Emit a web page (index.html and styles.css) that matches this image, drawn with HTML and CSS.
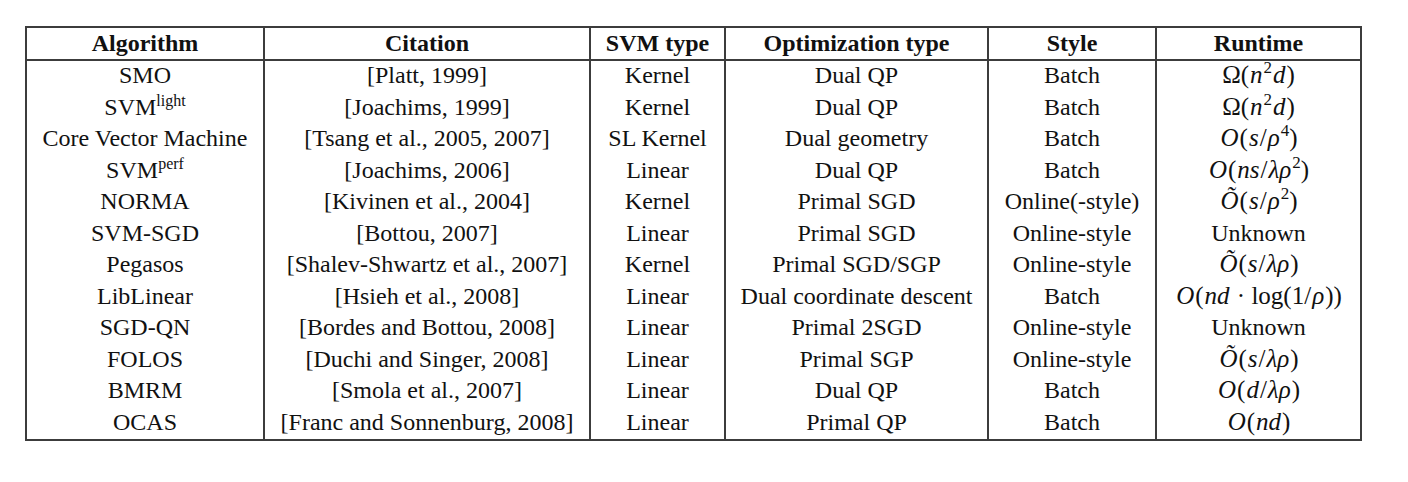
FILE: index.html
```html
<!DOCTYPE html>
<html>
<head>
<meta charset="utf-8">
<link rel="stylesheet" href="styles.css">
</head>
<body>
<div class="page">
<table class="svm">
<colgroup>
<col class="c1"><col class="c2"><col class="c3"><col class="c4"><col class="c5"><col class="c6">
</colgroup>
<thead>
<tr><th>Algorithm</th><th>Citation</th><th>SVM type</th><th>Optimization type</th><th>Style</th><th>Runtime</th></tr>
</thead>
<tbody>
<tr><td>SMO</td><td>[Platt, 1999]</td><td>Kernel</td><td>Dual QP</td><td>Batch</td><td class="m">Ω(<i>n</i><sup class="ms">2</sup><i>d</i>)</td></tr>
<tr><td>SVM<sup class="sv">light</sup></td><td>[Joachims, 1999]</td><td>Kernel</td><td>Dual QP</td><td>Batch</td><td class="m">Ω(<i>n</i><sup class="ms">2</sup><i>d</i>)</td></tr>
<tr><td>Core Vector Machine</td><td>[Tsang et al., 2005, 2007]</td><td>SL Kernel</td><td>Dual geometry</td><td>Batch</td><td class="m"><i>O</i>(<i>s</i>/<i>ρ</i><sup class="ms">4</sup>)</td></tr>
<tr><td>SVM<sup class="sv">perf</sup></td><td>[Joachims, 2006]</td><td>Linear</td><td>Dual QP</td><td>Batch</td><td class="m"><i>O</i>(<i>ns</i>/<i>λρ</i><sup class="ms">2</sup>)</td></tr>
<tr><td>NORMA</td><td>[Kivinen et al., 2004]</td><td>Kernel</td><td>Primal SGD</td><td>Online(-style)</td><td class="m"><i>Õ</i>(<i>s</i>/<i>ρ</i><sup class="ms">2</sup>)</td></tr>
<tr><td>SVM-SGD</td><td>[Bottou, 2007]</td><td>Linear</td><td>Primal SGD</td><td>Online-style</td><td>Unknown</td></tr>
<tr><td>Pegasos</td><td>[Shalev-Shwartz et al., 2007]</td><td>Kernel</td><td>Primal SGD/SGP</td><td>Online-style</td><td class="m"><i>Õ</i>(<i>s</i>/<i>λρ</i>)</td></tr>
<tr><td>LibLinear</td><td>[Hsieh et al., 2008]</td><td>Linear</td><td>Dual coordinate descent</td><td>Batch</td><td class="m"><i>O</i>(<i>nd</i> · log(1/<i>ρ</i>))</td></tr>
<tr><td>SGD-QN</td><td>[Bordes and Bottou, 2008]</td><td>Linear</td><td>Primal 2SGD</td><td>Online-style</td><td>Unknown</td></tr>
<tr><td>FOLOS</td><td>[Duchi and Singer, 2008]</td><td>Linear</td><td>Primal SGP</td><td>Online-style</td><td class="m"><i>Õ</i>(<i>s</i>/<i>λρ</i>)</td></tr>
<tr><td>BMRM</td><td>[Smola et al., 2007]</td><td>Linear</td><td>Dual QP</td><td>Batch</td><td class="m"><i>O</i>(<i>d</i>/<i>λρ</i>)</td></tr>
<tr><td>OCAS</td><td>[Franc and Sonnenburg, 2008]</td><td>Linear</td><td>Primal QP</td><td>Batch</td><td class="m"><i>O</i>(<i>nd</i>)</td></tr>
</tbody>
</table>
</div>
</body>
</html>
```

FILE: styles.css
```css
html, body {
  margin: 0;
  padding: 0;
  background: #ffffff;
}
.page {
  padding: 26px 0 0 25px;
}
.svm {
  border-collapse: collapse;
  table-layout: fixed;
  width: 1336px;
  font-family: "Liberation Serif", "Times New Roman", serif;
  font-size: 24px;
  color: #111;
  border: 2px solid #3c3c3c;
}
.c1 { width: 238px; }
.c2 { width: 326px; }
.c3 { width: 135px; }
.c4 { width: 263px; }
.c5 { width: 168px; }
.c6 { width: 205px; }
.svm th, .svm td {
  border-left: 2px solid #3c3c3c;
  border-right: 2px solid #3c3c3c;
  text-align: center;
  padding: 0;
  white-space: nowrap;
}
.svm th {
  font-weight: bold;
  height: 30px;
  line-height: 29px;
  padding-bottom: 1px;
  border-bottom: 2px solid #3c3c3c;
}
.svm td {
  height: 28.5px;
  line-height: 28.5px;
  padding: 0 0 3px;
}
.sv {
  font-size: 16px;
  vertical-align: 0;
  position: relative;
  top: -9px;
  line-height: 0;
}
.m {
  font-size: 25px;
}
.m i {
  font-style: italic;
  padding: 0 1px;
}
.ms {
  font-size: 17px;
  line-height: 0;
  position: relative;
  top: -10px;
  vertical-align: 0;
}
```
